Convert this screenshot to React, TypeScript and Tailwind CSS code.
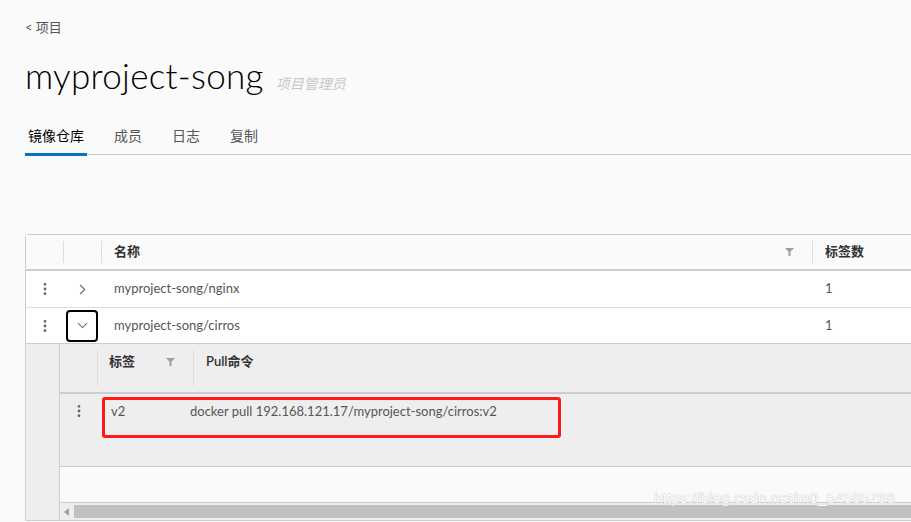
import { ChevronDown, ChevronRight, EllipsisVertical } from "lucide-react";

const font = { fontFamily: 'Lato, "Noto Sans CJK SC", sans-serif' };

function Filter() {
  return (
    <svg width="9" height="8" viewBox="0 0 9 8" className="shrink-0">
      <path d="M0 0h9L5.5 3.8V8h-2V3.8z" fill="#a0a0a0" />
    </svg>
  );
}

function Sep() {
  return <div className="absolute left-0 top-[6px] bottom-[6px] w-px bg-[#dddddd]" />;
}

export default function App() {
  return (
    <div
      className="relative w-[911px] h-[522px] overflow-hidden bg-[#fafafa] text-[#565656]"
      style={font}
    >
      <div className="pl-[25px]">
        {/* breadcrumb */}
        <div className="pt-[18px] h-[38px] text-[13px] leading-[18px]">&lt; 项目</div>

        {/* title */}
        <div className="flex items-baseline gap-[12px] mt-[17px] h-[44px]">
          <h1 className="text-[35px] leading-[40px] font-light text-black tracking-[0.3px]">
            myproject-song
          </h1>
          <span className="text-[14px] italic text-[#c8c8c8]">项目管理员</span>
        </div>

        {/* tabs */}
        <div className="flex mt-[26px] border-b border-[#cccccc] text-[14px]">
          <div className="relative px-[3px] pb-[8px] text-black">
            镜像仓库
            <div className="absolute left-0 right-0 bottom-[-2px] h-[3px] bg-[#0079b8]" />
          </div>
          <div className="ml-[27px] pb-[8px]">成员</div>
          <div className="ml-[30px] pb-[8px]">日志</div>
          <div className="ml-[30px] pb-[8px]">复制</div>
        </div>

        {/* datagrid */}
        <div className="mt-[79px] w-[960px] border border-[#cccccc] rounded-tl-[3px] text-[13px]">
          {/* header */}
          <div className="flex h-[36px] bg-[#fafafa] border-b-2 border-[#cccccc] text-[#313131] font-semibold">
            <div className="w-[37px]" />
            <div className="relative w-[38px]">
              <Sep />
            </div>
            <div className="relative w-[711px] flex items-center justify-between pl-[13px] pr-[18px]">
              <Sep />
              <span>名称</span>
              <Filter />
            </div>
            <div className="relative flex-1 flex items-center pl-[13px]">
              <Sep />
              <span>标签数</span>
            </div>
          </div>

          {/* row 1 */}
          <div className="flex h-[37px] bg-white border-b border-[#dddddd] items-center">
            <div className="w-[37px] flex justify-center text-[#666]">
              <EllipsisVertical size={16} strokeWidth={2.2} />
            </div>
            <div className="w-[38px] flex justify-center text-[#6f6f6f]">
              <ChevronRight size={17} strokeWidth={1.6} />
            </div>
            <div className="w-[711px] pl-[13px]">myproject-song/nginx</div>
            <div className="flex-1 pl-[13px]">1</div>
          </div>

          {/* row 2 */}
          <div className="flex h-[36px] bg-white border-b border-[#cccccc] items-center">
            <div className="w-[37px] flex justify-center text-[#666]">
              <EllipsisVertical size={16} strokeWidth={2.2} />
            </div>
            <div className="w-[38px] flex justify-center">
              <div className="w-[32px] h-[32px] rounded-[4px] border-2 border-black flex items-center justify-center text-[#6f6f6f]">
                <ChevronDown size={17} strokeWidth={1.6} />
              </div>
            </div>
            <div className="w-[711px] pl-[13px]">myproject-song/cirros</div>
            <div className="flex-1 pl-[13px]">1</div>
          </div>

          {/* expanded detail */}
          <div className="bg-[#eeeeee] pl-[33px]">
            <div className="border-l border-[#cccccc]">
              <div className="flex h-[50px] border-b-2 border-[#cccccc] text-[#313131] font-semibold">
                <div className="w-[37px]" />
                <div className="relative w-[96px] flex justify-between pl-[12px] pr-[18px] pt-[8px]">
                  <Sep />
                  <span>标签</span>
                  <span className="pt-[6px]">
                    <Filter />
                  </span>
                </div>
                <div className="relative flex-1 pl-[13px] pt-[8px]">
                  <Sep />
                  <span>Pull命令</span>
                </div>
              </div>

              <div className="relative flex h-[72px] pt-[8px]">
                <div className="w-[37px] flex justify-center pt-[1px] text-[#666]">
                  <EllipsisVertical size={16} strokeWidth={2.2} />
                </div>
                <div className="w-[93px] pl-[14px]">v2</div>
                <div>docker pull 192.168.121.17/myproject-song/cirros:v2</div>
                <div className="absolute left-[42px] top-[3px] w-[459px] h-[41px] border-[3px] border-[#ff1a1a] rounded-[3px]" />
              </div>

              <div className="h-[37px] bg-[#fafafa] border-t border-b border-[#cccccc] rounded-bl-[3px]" />

              <div className="flex items-center h-[17px] pl-[4px] gap-[4px]">
                <svg width="6" height="8" viewBox="0 0 6 8">
                  <path d="M5 0v8L0 4z" fill="#a3a3a3" />
                </svg>
                <div className="flex-1 h-[13px] bg-[#c1c1c1]" />
              </div>
            </div>
          </div>
        </div>
      </div>

      {/* watermark */}
      <div
        className="absolute left-[654px] top-[487px] text-[15px] text-white tracking-[0.2px]"
        style={{ fontFamily: "Arial, sans-serif", textShadow: "0 0 1px #9a9a9a" }}
      >
        https://blog.csdn.net/m0_54585768
      </div>
    </div>
  );
}
